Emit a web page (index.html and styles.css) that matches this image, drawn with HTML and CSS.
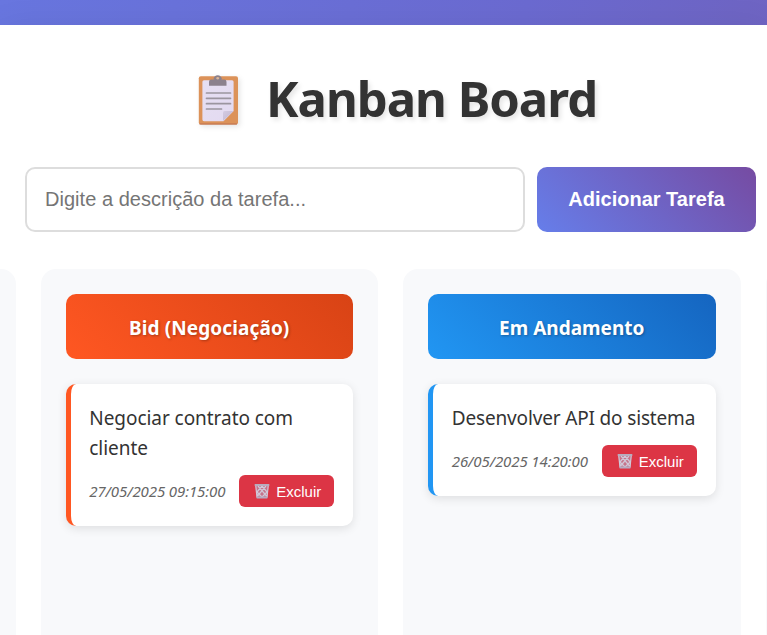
FILE: index.html
```html
<!DOCTYPE html>
<html lang="pt-BR">
<head>
<meta charset="utf-8">
<title>Kanban Board</title>
<link rel="stylesheet" href="styles.css">
</head>
<body>
<svg class="defs" aria-hidden="true">
  <defs>
    <linearGradient id="paper" x2="1" y2="1"><stop stop-color="#e6dff2"/><stop offset="1" stop-color="#e3daf1"/></linearGradient>
    <linearGradient id="fold" x2="1" y2="1"><stop stop-color="#d4cbe2"/><stop offset="1" stop-color="#bfb3cd"/></linearGradient>
    <symbol id="trash" viewBox="0 0 16 16">
      <path d="M1.500 2.500h13l-1.100 12.200H2.600z" fill="#c6748b"/>
      <path d="M1.800 3l1.200 11.500M14.200 3L13 14.500M4 3l8.500 10M8 3l5 6M12 3l-8.500 10M8 3L3 9M4 13L3 11M8 14l5-5M8 14L3 9" fill="none" stroke="#d0c8d8" stroke-width="1.200"/>
      <path d="M.7 1h14.600v2H.7z" fill="#b8adbf"/>
      <path d="M2.500 13.500h11l-.2 2H2.700z" fill="#b5abc2"/>
    </symbol>
  </defs>
</svg>
<main class="container">
  <h1 class="title">
    <svg class="clipboard" viewBox="0 0 41 50" aria-hidden="true">
      <rect x=".8" y="1.200" width="39.200" height="48.300" rx="2" fill="#dc9259"/>
      <path d="M1.500 49h37.500" stroke="#bd7050" stroke-width="1.200"/>
      <path d="M6 5.200h28q1.600 0 1.600 1.600V36L25.500 46.200H6q-1.600 0-1.600-1.600V6.800q0-1.600 1.600-1.600z" fill="url(#paper)"/>
      <path d="M25 46V37.500q0-1.500 1.500-1.500h9z" fill="url(#fold)"/>
      <path d="M8.500 18h24M8.500 23.300h24M8.500 28.700h24M8.500 34h15" stroke="#9b959f" stroke-width="1.700" stroke-linecap="round"/>
      <path d="M11 10.700V6.800q0-2.400 2.400-2.400h2.900a3.700 3.700 0 0 1 6.800 0h3q2.400 0 2.400 2.400v3.900z" fill="#8b818d"/>
      <path d="M16.400 4.500a3.300 3.300 0 0 1 6.600 0" fill="none" stroke="#8b818d" stroke-width="1.800"/>
      <circle cx="19.700" cy="3.300" r="1.300" fill="#d9b69c"/>
    </svg>
    <span class="title-text">Kanban Board</span>
  </h1>
  <form class="task-form">
    <input class="task-input" type="text" placeholder="Digite a descrição da tarefa...">
    <button class="add-button" type="button">Adicionar Tarefa</button>
  </form>
  <div class="board">
    <section class="column"></section>
    <section class="column">
      <h2 class="column-title bid">Bid (Negociação)</h2>
      <article class="card card-bid">
        <p class="card-text">Negociar contrato com cliente</p>
        <div class="card-footer">
          <time class="date">27/05/2025 09:15:00</time>
          <button class="delete" type="button"><svg class="trash" aria-hidden="true"><use href="#trash"/></svg>Excluir</button>
        </div>
      </article>
    </section>
    <section class="column">
      <h2 class="column-title progress">Em Andamento</h2>
      <article class="card card-progress">
        <p class="card-text wide">Desenvolver API do sistema</p>
        <div class="card-footer">
          <time class="date">26/05/2025 14:20:00</time>
          <button class="delete" type="button"><svg class="trash" aria-hidden="true"><use href="#trash"/></svg>Excluir</button>
        </div>
      </article>
    </section>
    <section class="column"></section>
  </div>
</main>
</body>
</html>
```
FILE: styles.css
```css
* { box-sizing: border-box; }
html { height: 100%; overflow: hidden; }
body {
  margin: 0;
  height: 635px;
  padding-top: 25px;
  overflow: hidden;
  background: linear-gradient(100deg, #6876df 0%, #6b6ad0 60%, #7062bd 100%);
  font-family: "Noto Sans", sans-serif;
  color: #333;
}
.defs { position: absolute; width: 0; height: 0; }
.container {
  height: 610px;
  overflow: hidden;
  padding: 37px 0 0 25px;
  background: #fff;
  box-shadow: 0 10px 38px rgba(0, 0, 0, .1);
}
.title {
  display: flex;
  align-items: center;
  height: 74px;
  margin: 0 0 31px 173px;
  font-size: 49px;
  line-height: 72px;
  font-weight: 700;
  white-space: nowrap;
  text-shadow: 2.500px 2.500px 5px rgba(0, 0, 0, .1);
}
.clipboard {
  flex: none;
  width: 41px;
  height: 50px;
  margin-top: 2px;
  overflow: visible;
  filter: drop-shadow(2.500px 2.500px 2.500px rgba(0, 0, 0, .1));
}
.title-text { margin: 0 0 2px 27px; letter-spacing: -1px; }
.task-form { display: flex; gap: 12px; height: 65px; margin: 0 0 37px; }
.task-input {
  width: 500px;
  padding: 0 18px 1px;
  border: 2px solid #ddd;
  border-radius: 10px;
  background: #fff;
  font: 20px "Liberation Sans", sans-serif;
  letter-spacing: .03px;
}
.task-input::placeholder { color: #757575; opacity: 1; }
.add-button {
  width: 219px;
  padding: 0 0 1px;
  border: 0;
  border-radius: 10px;
  background: linear-gradient(45deg, #667eea, #764ba2);
  color: #fff;
  font: bold 20px "Liberation Sans", sans-serif;
}
.board { display: flex; gap: 25px; width: 1425px; margin-left: -347px; }
.column {
  flex: 0 0 337.500px;
  min-width: 0;
  height: 500px;
  padding: 25px;
  border-radius: 15px;
  background: #f8f9fb;
}
.column-title {
  height: 65px;
  margin: 0 0 25px;
  border-radius: 10px;
  color: #fff;
  font-size: 19px;
  line-height: 69px;
  font-weight: 700;
  text-align: center;
  text-shadow: 1px 1px 2.500px rgba(0, 0, 0, .3);
}
.bid { background: linear-gradient(45deg, #ff5722, #d84315); letter-spacing: .1px; }
.progress { background: linear-gradient(45deg, #2196f3, #1565c0); }
.card {
  padding: 18.750px;
  border-left: 5px solid;
  border-radius: 10px;
  background: #fff;
  box-shadow: 0 2.500px 10px rgba(0, 0, 0, .1);
}
.card-bid { border-color: #ff5722; }
.card-progress { border-color: #2196f3; }
.card-text { margin: 0 0 12px; font-size: 19px; line-height: 30px; letter-spacing: -.05px; color: #333; }
.wide { letter-spacing: -.16px; white-space: nowrap; }
.card-footer { display: flex; justify-content: space-between; align-items: center; height: 32px; }
.date { font-size: 15px; font-style: italic; letter-spacing: -.1px; color: #666; white-space: nowrap; }
.delete {
  display: flex;
  flex: none;
  align-items: center;
  width: 95px;
  height: 32px;
  padding: 2px 0 0 15px;
  border: 0;
  border-radius: 6px;
  background: #dc3545;
  color: #fff;
  font: 15px "Liberation Sans", sans-serif;
}
.trash { width: 16px; height: 16px; margin: -1px 6px 0 0; }
```
